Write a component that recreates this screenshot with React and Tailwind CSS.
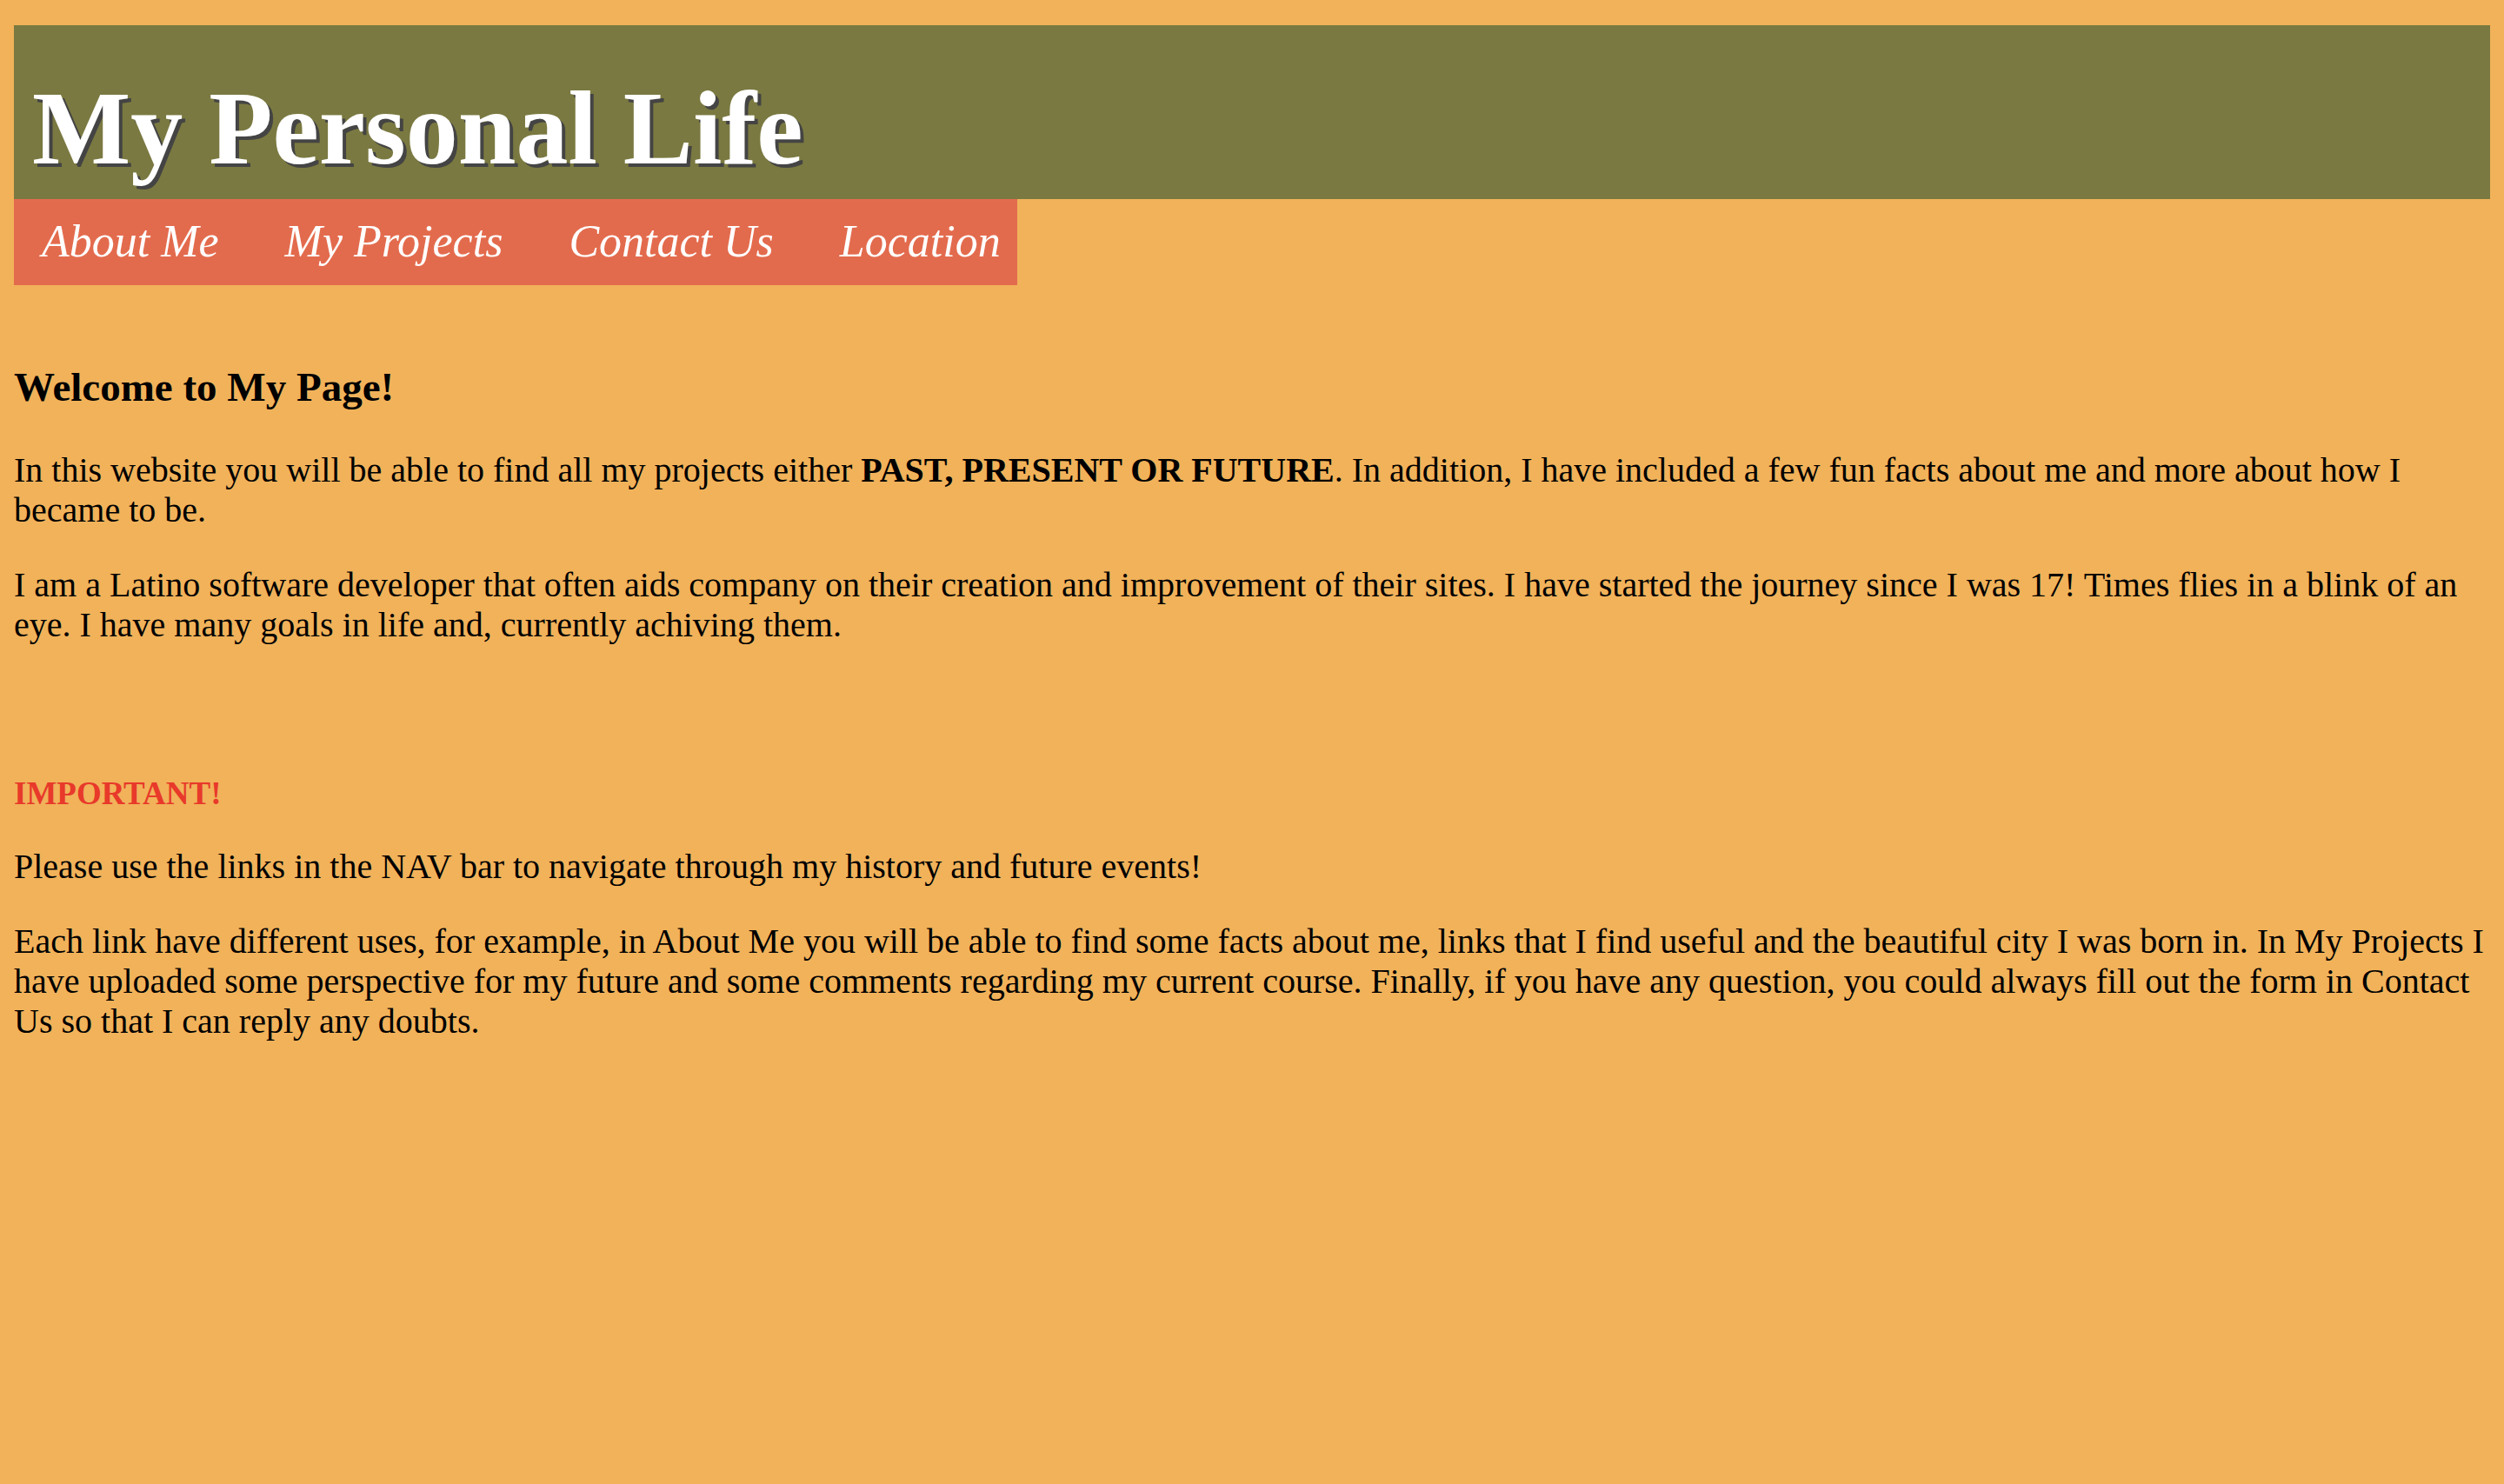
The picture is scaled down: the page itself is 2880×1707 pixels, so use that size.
import React from "react";

const links = ["About Me", "My Projects", "Contact Us", "Location"];

const App = () => {
  return (
    <div className="min-h-screen bg-[#f1b25a] px-[16px] pt-[29px] pb-[16px] text-black font-['Liberation_Serif','Times_New_Roman',serif]">
      <header className="h-[200px] bg-[#7a7941] pl-[21px] pt-[50px]">
        <h1 className="text-[120px] font-bold leading-[138px] text-white [text-shadow:4px_4px_0_#444]">
          My Personal Life
        </h1>
      </header>

      <nav className="inline-flex h-[99px] gap-[76px] bg-[#e36b4d] pl-[32px] pr-[19px] pt-[19px]">
        {links.map((link) => (
          <a key={link} href="#" className="text-[52px] italic leading-[60px] text-white">
            {link}
          </a>
        ))}
      </nav>

      <main>
        <h3 className="mt-[90px] text-[47px] font-bold leading-[54px]">Welcome to My Page!</h3>
        <p className="mt-[46px] text-[40px] leading-[46px]">
          In this website you will be able to find all my projects either <b>PAST, PRESENT OR FUTURE</b>. In addition, I
          have included a few fun facts about me and more about how I became to be.
        </p>
        <p className="mt-[40px] text-[40px] leading-[46px]">
          I am a Latino software developer that often aids company on their creation and improvement of their sites. I
          have started the journey since I was 17! Times flies in a blink of an eye. I have many goals in life and,
          currently achiving them.
        </p>

        <h4 className="mt-[149px] text-[37px] font-bold leading-[43px] text-[#e8392a]">IMPORTANT!</h4>
        <p className="mt-[40px] text-[40px] leading-[46px]">
          Please use the links in the NAV bar to navigate through my history and future events!
        </p>
        <p className="mt-[40px] text-[40px] leading-[46px]">
          Each link have different uses, for example, in About Me you will be able to find some facts about me, links
          that I find useful and the beautiful city I was born in. In My Projects I have uploaded some perspective for my
          future and some comments regarding my current course. Finally, if you have any question, you could always fill
          out the form in Contact Us so that I can reply any doubts.
        </p>
      </main>
    </div>
  );
};

export default App;
